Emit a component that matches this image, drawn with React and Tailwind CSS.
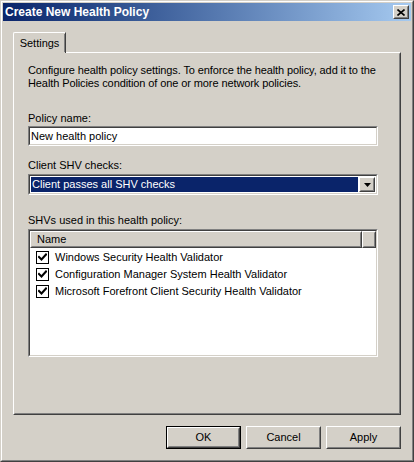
import React from 'react';

const font = { fontFamily: '"Liberation Sans", Arial, sans-serif' };

const raised =
  'border border-t-white border-l-white border-r-[#404040] border-b-[#404040]';
const raisedInner =
  'border border-t-[#d4d0c8] border-l-[#d4d0c8] border-r-[#808080] border-b-[#808080]';
const sunken =
  'border border-t-[#808080] border-l-[#808080] border-r-white border-b-white';
const sunkenInner =
  'border border-t-[#404040] border-l-[#404040] border-r-[#d4d0c8] border-b-[#d4d0c8]';

const Check = () => (
  <div className="w-[13px] h-[13px] border border-black bg-white flex items-center justify-center">
    <svg width="9" height="9" viewBox="0 0 9 9">
      <path d="M1 4 L3.5 6.5 L8 1.5" fill="none" stroke="black" strokeWidth="2" strokeLinecap="square" />
    </svg>
  </div>
);

const Button = ({ label, isDefault }) => (
  <div className={`w-[75px] h-[23px] ${isDefault ? 'border border-black' : ''}`}>
    <div className={`w-full h-full ${raised}`}>
      <div className={`w-full h-full ${raisedInner} flex items-center justify-center text-[11px] text-black`}>
        {label}
      </div>
    </div>
  </div>
);

const shvs = [
  'Windows Security Health Validator',
  'Configuration Manager System Health Validator',
  'Microsoft Forefront Client Security Health Validator',
];

export default function App() {
  return (
    <div className="w-[414px] h-[462px] bg-[#d4d0c8]" style={font}>
      <div className="w-full h-full border border-t-[#d4d0c8] border-l-[#d4d0c8] border-r-[#404040] border-b-[#404040]">
        <div className="w-full h-full border border-t-white border-l-white border-r-[#808080] border-b-[#808080] p-[1px] flex flex-col">
          {/* Title bar */}
          <div className="h-[18px] bg-gradient-to-r from-[#0a246a] to-[#a6caf0] flex items-center justify-between pl-[2px] pr-[2px]">
            <span className="text-white font-bold text-[12px] leading-none">Create New Health Policy</span>
            <div className={`w-[16px] h-[14px] bg-[#d4d0c8] ${raised}`}>
              <div className={`w-full h-full ${raisedInner} flex items-center justify-center`}>
                <svg width="8" height="7" viewBox="0 0 8 7">
                  <path d="M0.5 0.5 L7.5 6.5 M7.5 0.5 L0.5 6.5" stroke="black" strokeWidth="1.6" />
                </svg>
              </div>
            </div>
          </div>

          {/* Body */}
          <div className="flex-1 flex flex-col pl-[10px] pr-[10px] pt-[11px] pb-[10px]">
            {/* Tab strip */}
            <div className="flex h-[20px]">
              <div className="relative z-10 w-[53px] h-[21px] bg-[#d4d0c8] border-t border-l border-white border-r border-r-[#404040] rounded-tl-[2px] flex items-center justify-center text-[11px] text-black">
                <span className="border-r border-[#808080] absolute right-0 top-[1px] bottom-[1px]" />
                Settings
              </div>
            </div>

            {/* Panel */}
            <div className="h-[363px] border border-t-white border-l-white border-r-[#404040] border-b-[#404040]">
              <div className="h-full border border-transparent border-r-[#808080] border-b-[#808080] pl-[13px] pr-[21px] pt-[10px] text-[11px] leading-[13px] text-black flex flex-col">
                <p className="whitespace-nowrap tracking-[-0.1px]">
                  Configure health policy settings. To enforce the health policy, add it to the
                  <br />
                  Health Policies condition of one or more network policies.
                </p>

                <div className="mt-[22px]">Policy name:</div>
                <div className={`mt-[1px] h-[20px] ${sunken}`}>
                  <div className={`h-full bg-white ${sunkenInner} flex items-center pl-[1px]`}>
                    New health policy
                  </div>
                </div>

                <div className="mt-[13px]">Client SHV checks:</div>
                <div className={`mt-[2px] h-[21px] ${sunken}`}>
                  <div className={`h-full bg-white ${sunkenInner} flex items-center p-[1px]`}>
                    <div className="flex-1 h-full bg-[#0a246a] text-white flex items-center pl-[1px] mr-[1px]">
                      Client passes all SHV checks
                    </div>
                    <div className={`w-[16px] h-full bg-[#d4d0c8] ${raised}`}>
                      <div className={`w-full h-full ${raisedInner} flex items-center justify-center`}>
                        <svg width="7" height="4" viewBox="0 0 7 4">
                          <path d="M0 0 H7 L3.5 4 Z" fill="black" />
                        </svg>
                      </div>
                    </div>
                  </div>
                </div>

                <div className="mt-[19px]">SHVs used in this health policy:</div>
                <div className={`mt-[2px] h-[128px] ${sunken}`}>
                  <div className={`h-full bg-white ${sunkenInner} flex flex-col`}>
                    <div className="flex h-[17px]">
                      <div className={`flex-1 bg-[#d4d0c8] ${raised}`}>
                        <div className={`h-full ${raisedInner} flex items-center pl-[5px]`}>Name</div>
                      </div>
                      <div className={`w-[14px] bg-[#d4d0c8] ${raised}`}>
                        <div className={`h-full ${raisedInner}`} />
                      </div>
                    </div>
                    <div className="flex flex-col pt-[1px]">
                      {shvs.map((s) => (
                        <div key={s} className="h-[17px] flex items-center pl-[6px] gap-[6px]">
                          <Check />
                          <span>{s}</span>
                        </div>
                      ))}
                    </div>
                  </div>
                </div>
              </div>
            </div>

            {/* Buttons */}
            <div className="mt-[11px] flex justify-end gap-[5px]">
              <Button label="OK" isDefault />
              <Button label="Cancel" />
              <Button label="Apply" />
            </div>
          </div>
        </div>
      </div>
    </div>
  );
}
